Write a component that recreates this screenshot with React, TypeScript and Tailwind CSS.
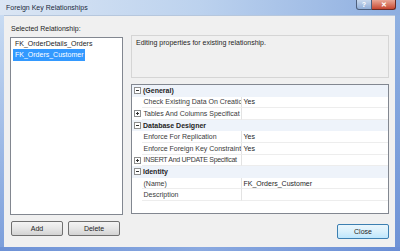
import React from "react";

type Row = { label: string; value?: string; cat?: boolean; exp?: "-" | "+"; tight?: boolean };

const rows: Row[] = [
  { label: "(General)", cat: true, exp: "-" },
  { label: "Check Existing Data On Creatio", value: "Yes" },
  { label: "Tables And Columns Specificat", exp: "+" },
  { label: "Database Designer", cat: true, exp: "-" },
  { label: "Enforce For Replication", value: "Yes" },
  { label: "Enforce Foreign Key Constraint", value: "Yes" },
  { label: "INSERT And UPDATE Specificat", exp: "+", tight: true },
  { label: "Identity", cat: true, exp: "-" },
  { label: "(Name)", value: "FK_Orders_Customer" },
  { label: "Description", value: "" },
];

function Expander({ sign }: { sign: "-" | "+" }) {
  return (
    <svg width="7" height="7" viewBox="0 0 7 7" className="block">
      <rect x="0.5" y="0.5" width="6" height="6" fill="#ffffff" stroke="#8e8f8f" />
      <line x1="2" y1="3.5" x2="5" y2="3.5" stroke="#333" strokeWidth="1" />
      {sign === "+" && <line x1="3.5" y1="2" x2="3.5" y2="5" stroke="#333" strokeWidth="1" />}
    </svg>
  );
}

export default function App() {
  return (
    <div className="w-[400px] h-[251px] flex flex-col overflow-hidden font-['Liberation_Sans',Arial,sans-serif] text-[7px] leading-[9px] text-[#1e1e1e] bg-[#7c9fdc]">
      {/* Title bar */}
      <div className="h-[15px] flex items-start justify-between bg-linear-to-r from-[#dbe6f4] via-[#bcd2ee] to-[#8eaee0]">
        <div className="pl-[6px] pt-[3px] text-[#1b2a3c] text-[7px] leading-[9px]">Foreign Key Relationships</div>
        <div className="flex mr-[4px]">
          <div className="w-[16px] h-[10px] flex items-center justify-center rounded-bl-[3px] border border-t-0 border-[#4d5f7c] bg-linear-to-b from-[#c9d9ee] to-[#92afd8] text-white font-bold text-[7px] leading-[7px]">
            ?
          </div>
          <div className="w-[24px] h-[10px] flex items-center justify-center rounded-br-[3px] border border-t-0 border-l-0 border-[#6b2a22] bg-linear-to-b from-[#e9a796] to-[#c5452f] text-white font-bold text-[7px] leading-[7px]">
            ✕
          </div>
        </div>
      </div>

      <div className="flex-1 flex">
        <div className="w-[4px] bg-linear-to-b from-[#c8dbf2] to-[#7d9fdb]" />
        {/* Client */}
        <div className="flex-1 flex bg-[#f0f0f0] border-t border-[#b6c7dd]">
          {/* Left column */}
          <div className="ml-[6px] w-[113px] flex flex-col">
            <div className="pt-[8px] pl-[1px] h-[21px]">Selected Relationship:</div>
            <div className="h-[178px] bg-white border border-[#828790]">
              <div className="h-[11px] flex items-center pl-[4px]">FK_OrderDetails_Orders</div>
              <div className="h-[11px] flex items-center pl-[2px]">
                <span className="bg-[#3399ff] text-white px-[2px] h-[12px] flex items-center">FK_Orders_Customer</span>
              </div>
            </div>
            <div className="mt-[6px] flex gap-[5px] pl-[1px]">
              <div className="w-[52px] h-[15px] flex items-center justify-center rounded-[2px] border border-[#707070] bg-linear-to-b from-[#f4f4f4] via-[#e6e6e6] to-[#d3d3d3]">
                Add
              </div>
              <div className="w-[52px] h-[15px] flex items-center justify-center rounded-[2px] border border-[#707070] bg-linear-to-b from-[#f4f4f4] via-[#e6e6e6] to-[#d3d3d3]">
                Delete
              </div>
            </div>
          </div>

          {/* Right column */}
          <div className="ml-[8px] w-[258px] flex flex-col">
            <div className="mt-[19px] h-[43px] border border-[#d5d5d5] bg-[#f0f0f0] pl-[4px] pt-[2px]">
              Editing properties for existing relationship.
            </div>
            <div className="mt-[6px] h-[130px] bg-white border border-[#828790] flex flex-col">
              {rows.map((r, i) =>
                r.cat ? (
                  <div key={i} className="h-[11.6px] flex items-center bg-[#eef3fa]">
                    <div className="w-[10px] flex justify-center">{r.exp && <Expander sign={r.exp} />}</div>
                    <div className="pl-[1px] font-bold text-[#1e1e1e]">{r.label}</div>
                  </div>
                ) : (
                  <div key={i} className="h-[11.6px] flex">
                    <div className="w-[10px] flex items-center justify-center">{r.exp && <Expander sign={r.exp} />}</div>
                    <div
                      className={
                        r.tight
                          ? "w-[100px] pl-[1.5px] flex items-center overflow-hidden whitespace-nowrap tracking-[-0.3px] text-[#3a3a3a] border-b border-[#ededed] border-r border-r-[#e3e3e3]"
                          : "w-[100px] pl-[1.5px] flex items-center overflow-hidden whitespace-nowrap text-[#3a3a3a] border-b border-[#ededed] border-r border-r-[#e3e3e3]"
                      }
                    >
                      {r.label}
                    </div>
                    <div className="flex-1 pl-[1.5px] flex items-center whitespace-nowrap overflow-hidden text-[#1e1e1e] border-b border-[#ededed]">
                      {r.value}
                    </div>
                  </div>
                )
              )}
            </div>
            <div className="mt-[10px] flex justify-end">
              <div className="w-[52px] h-[15px] flex items-center justify-center rounded-[2px] border border-[#3c7fb1] bg-linear-to-b from-[#eaf6fd] via-[#d9f0fc] to-[#bee6fd]">
                Close
              </div>
            </div>
          </div>
        </div>
        <div className="w-[5px] bg-linear-to-b from-[#8fb0e1] to-[#6f93d6]" />
      </div>
      <div className="h-[4px] bg-linear-to-r from-[#6e92d6] via-[#8aa9e0] to-[#6a8ed5]" />
    </div>
  );
}
